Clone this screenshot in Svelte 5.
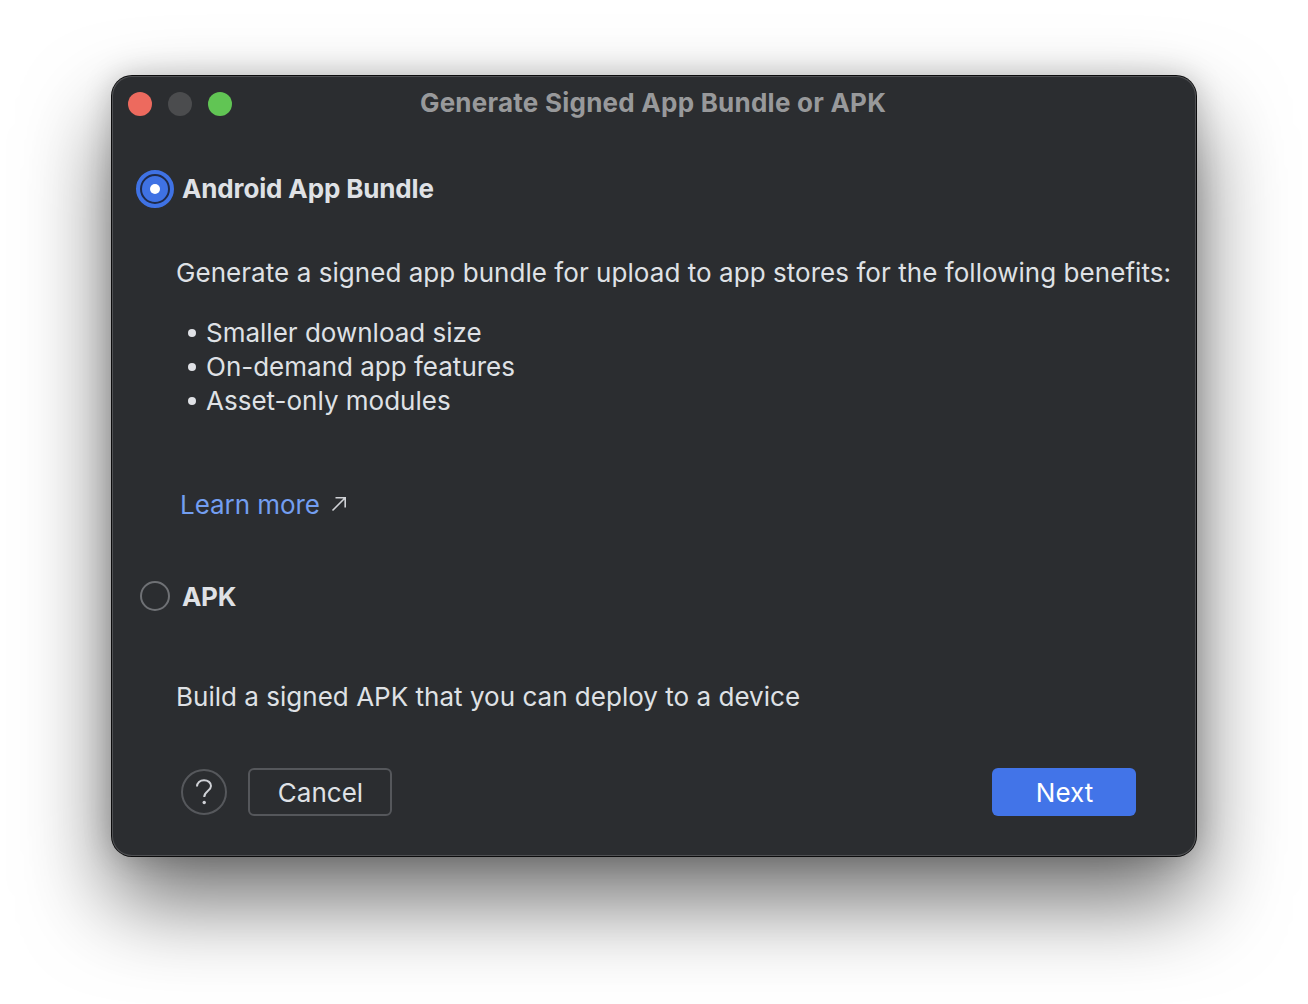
<script>
  const features = ['Smaller download size', 'On-demand app features', 'Asset-only modules'];
</script>

<div class="page">
  <div class="window">
    <header class="titlebar">
      <div class="lights">
        <span class="light red"></span>
        <span class="light grey"></span>
        <span class="light green"></span>
      </div>
      <div class="title">Generate Signed App Bundle or APK</div>
    </header>

    <div class="option first">
      <span class="radio on"><span class="dot"></span></span>
      <span class="label">Android App Bundle</span>
    </div>
    <p class="desc intro">Generate a signed app bundle for upload to app stores for the following benefits:</p>
    <ul>
      {#each features as f}
        <li>{f}</li>
      {/each}
    </ul>
    <div class="learn">
      <span class="link">Learn more</span>
      <svg width="16" height="16" viewBox="0 0 16 16" fill="none" stroke="#d0d2d6" stroke-width="1.6">
        <path d="M1.5 14.5 14 2M4.5 1.8H14.2V11.5" />
      </svg>
    </div>
    <div class="option second">
      <span class="radio"></span>
      <span class="label">APK</span>
    </div>
    <p class="desc apk">Build a signed APK that you can deploy to a device</p>

    <footer>
      <div class="help">
        <svg width="18" height="26" viewBox="0 0 18 26" fill="none" stroke="#cfd1d6" stroke-width="2">
          <path d="M2 7.500C2 3.700 5 1.200 9 1.200s7 2.500 7 5.800c0 5-6.800 5.200-6.800 11" />
          <circle cx="9.200" cy="23.500" r="1.700" fill="#cfd1d6" stroke="none" />
        </svg>
      </div>
      <button class="cancel">Cancel</button>
      <button class="next">Next</button>
    </footer>
  </div>
</div>

<style>
  :global(body) {
    margin: 0;
    background: #fff;
  }
  .page {
    width: 1308px;
    height: 1004px;
    padding: 76px 0 0 112px;
    box-sizing: border-box;
    overflow: hidden;
    font-family: Inter, "Liberation Sans", sans-serif;
  }
  .window {
    width: 1084px;
    height: 780px;
    box-sizing: border-box;
    background: #2b2d30;
    border-radius: 20px;
    box-shadow:
      0 0 0 1px #4f5053 inset,
      0 0 0 1px #0c0c0d,
      0 44px 88px rgba(0, 0, 0, 0.58),
      0 0 30px rgba(0, 0, 0, 0.2);
    color: #dfe1e5;
    display: flex;
    flex-direction: column;
    overflow: hidden;
  }
  .titlebar {
    height: 56px;
    flex: none;
    position: relative;
    display: flex;
    align-items: center;
    justify-content: center;
  }
  .lights {
    position: absolute;
    left: 16px;
    top: 16px;
    display: flex;
    gap: 16px;
  }
  .light {
    width: 24px;
    height: 24px;
    border-radius: 50%;
  }
  .red { background: #ed6a5e; }
  .grey { background: #4b4c4e; }
  .green { background: #61c554; }
  .title {
    font-size: 26px;
    font-weight: 700;
    color: #98999b;
    margin: -3px 2px 0 0;
    letter-spacing: 0.24px;
  }
  .option {
    display: flex;
    align-items: center;
    height: 38px;
    padding-left: 24px;
    flex: none;
  }
  .first { margin-top: 38px; }
  .first .label { margin-top: -2px; }
  .second { margin-top: 56px; padding-left: 28px; }
  .radio {
    width: 30px;
    height: 30px;
    box-sizing: border-box;
    border: 2px solid #6f7175;
    border-radius: 50%;
    margin-right: 12px;
    flex: none;
  }
  .radio.on {
    width: 38px;
    height: 38px;
    border: 4px solid #3f72e4;
    margin-right: 8px;
    background: #3f72e4;
    display: flex;
    align-items: center;
    justify-content: center;
    position: relative;
  }
  .radio.on::before {
    content: '';
    position: absolute;
    inset: 0;
    border-radius: 50%;
    border: 2px solid #1f2b4a;
  }
  .dot {
    width: 10px;
    height: 10px;
    border-radius: 50%;
    background: #fff;
    position: relative;
  }
  .label {
    font-size: 26px;
    font-weight: 700;
    letter-spacing: -0.14px;
  }
  .second .label { letter-spacing: -0.3px; }
  .desc {
    margin: 0;
    padding-left: 64px;
    font-size: 26px;
    line-height: 34px;
    white-space: nowrap;
    letter-spacing: 0.05px;
  }
  .intro { margin-top: 48px; }
  ul {
    list-style: none;
    margin: 26px 0 0;
    padding: 0 0 0 74px;
    font-size: 26px;
    line-height: 34px;
  }
  li {
    position: relative;
    padding-left: 20px;
  }
  li::before {
    content: '';
    position: absolute;
    left: 2px;
    top: 13px;
    width: 8px;
    height: 8px;
    border-radius: 50%;
    background: #dfe1e5;
  }
  .learn {
    margin-top: 69px;
    padding-left: 68px;
    display: flex;
    align-items: center;
    height: 34px;
    flex: none;
  }
  .link {
    font-size: 26px;
    color: #739ef0;
    margin-right: 11px;
    letter-spacing: -0.05px;
  }
  .apk { margin-top: 65px; letter-spacing: 0.02px; }
  footer {
    margin-top: 54px;
    padding: 0 60px 0 69px;
    display: flex;
    align-items: center;
    flex: none;
  }
  .help {
    width: 46px;
    height: 46px;
    box-sizing: border-box;
    border: 2px solid #56585c;
    border-radius: 50%;
    display: flex;
    align-items: center;
    justify-content: center;
    margin-right: 21px;
  }
  button {
    height: 48px;
    width: 144px;
    border-radius: 6px;
    font: 400 26px Inter, "Liberation Sans", sans-serif;
    padding: 0 0 0 1px;
  }
  .cancel {
    background: transparent;
    border: 2px solid #55575b;
    color: #dfe1e5;
  }
  .next {
    margin-left: auto;
    border: none;
    background: #4274e8;
    color: #fff;
  }
</style>
